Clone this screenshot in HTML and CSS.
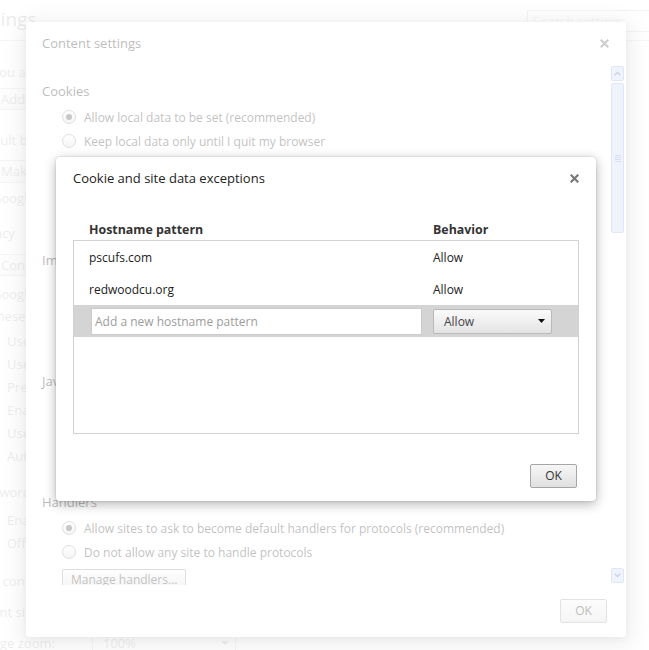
FILE: index.html
```html
<!DOCTYPE html>
<html lang="en">
<head>
<meta charset="utf-8">
<title>Settings - Cookie and site data exceptions</title>
<link rel="stylesheet" href="styles.css">
</head>
<body>
<div class="page">
  <header class="page-header">
    <h1 class="page-title">Settings</h1>
    <div class="search">Search settings</div>
  </header>
  <main class="page-main">
    <p class="ind line m19">You are currently the only Google Chrome user.</p>
    <div class="ind m4"><span class="pbtn">Add new user...</span></div>
    <h3 class="sec-title m18">Default browser</h3>
    <div class="ind m8"><span class="pbtn tall">Make Google Chrome my default browser</span></div>
    <p class="ind line m3">Google Chrome is not currently your default browser.</p>
    <h3 class="sec-title m11">Privacy</h3>
    <div class="ind m9"><span class="pbtn">Content settings...</span> <span class="pbtn">Clear browsing data...</span></div>
    <p class="ind para m7">Google Chrome may use web services to improve your browsing experience. You may optionally disable<br>these services.</p>
    <div class="ind chk-list m2">
      <div class="chk-row"><span class="chk"></span>Use a web service to help resolve navigation errors</div>
      <div class="chk-row"><span class="chk"></span>Use a prediction service to help complete searches and URLs typed in the address bar</div>
      <div class="chk-row"><span class="chk"></span>Predict network actions to improve page load performance</div>
      <div class="chk-row"><span class="chk"></span>Enable phishing and malware protection</div>
      <div class="chk-row"><span class="chk"></span>Use a web service to help resolve spelling errors</div>
      <div class="chk-row"><span class="chk"></span>Automatically send usage statistics and crash reports to Google</div>
    </div>
    <h3 class="sec-title m13">Passwords and forms</h3>
    <div class="ind chk-list m4">
      <div class="chk-row"><span class="chk"></span>Enable Autofill to fill out web forms in a single click.</div>
      <div class="chk-row"><span class="chk"></span>Offer to save passwords I enter on the web.</div>
    </div>
    <h3 class="sec-title m15">Web content</h3>
    <div class="form-row m7"><span class="form-label">Font size:</span><span class="pselect">Medium<i class="caret"></i></span></div>
    <div class="form-row m7"><span class="form-label">Page zoom:</span><span class="pselect">100%<i class="caret"></i></span></div>
  </main>
</div>

<div class="overlay overlay-low"></div>

<section class="cs-dialog">
  <div class="cs-head">
    <span class="cs-title">Content settings</span>
    <span class="close"><svg width="9" height="9" viewBox="0 0 9 9"><path d="M1.5 1.5L7.5 7.5M7.5 1.5L1.5 7.5" stroke="#6e6e6e" stroke-width="2.2" stroke-linecap="square"/></svg></span>
  </div>
  <div class="cs-body">
    <div class="cs-scroll">
      <div class="cs-sec first">
        <h4 class="cs-h">Cookies</h4>
        <div class="cs-opts">
          <div class="opt"><span class="radio on"></span>Allow local data to be set (recommended)</div>
          <div class="opt"><span class="radio"></span>Keep local data only until I quit my browser</div>
          <div class="opt"><span class="radio"></span>Block sites from setting any data</div>
          <div class="opt"><span class="cbox"></span>Block third-party cookies and site data</div>
        </div>
        <div class="cs-btns"><span class="sbtn">Manage exceptions...</span><span class="sbtn">All cookies and site data...</span></div>
      </div>
      <div class="cs-sec">
        <h4 class="cs-h">Images</h4>
        <div class="cs-opts">
          <div class="opt"><span class="radio on"></span>Show all images (recommended)</div>
          <div class="opt"><span class="radio"></span>Do not show any images</div>
        </div>
        <div class="cs-btns"><span class="sbtn">Manage exceptions...</span></div>
      </div>
      <div class="cs-sec">
        <h4 class="cs-h">JavaScript</h4>
        <div class="cs-opts">
          <div class="opt"><span class="radio on"></span>Allow all sites to run JavaScript (recommended)</div>
          <div class="opt"><span class="radio"></span>Do not allow any site to run JavaScript</div>
        </div>
        <div class="cs-btns"><span class="sbtn">Manage exceptions...</span></div>
      </div>
      <div class="cs-sec">
        <h4 class="cs-h">Handlers</h4>
        <div class="cs-opts">
          <div class="opt"><span class="radio on"></span>Allow sites to ask to become default handlers for protocols (recommended)</div>
          <div class="opt"><span class="radio"></span>Do not allow any site to handle protocols</div>
        </div>
        <div class="cs-btns"><span class="sbtn">Manage handlers...</span></div>
      </div>
    </div>
    <div class="scrollbar">
      <div class="sb-btn"><svg width="7" height="5" viewBox="0 0 7 5"><path d="M0.8 4.2L3.5 1.4L6.2 4.2" fill="none" stroke="#5b71a1" stroke-width="1.3"/></svg></div>
      <div class="sb-thumb"><span class="grip"></span><span class="grip"></span><span class="grip"></span><span class="grip"></span></div>
      <div class="sb-space"></div>
      <div class="sb-btn down"><svg width="7" height="5" viewBox="0 0 7 5"><path d="M0.8 0.8L3.5 3.6L6.2 0.8" fill="none" stroke="#5b71a1" stroke-width="1.3"/></svg></div>
    </div>
  </div>
  <div class="cs-foot"><span class="btn">OK</span></div>
</section>

<div class="overlay overlay-high"></div>

<section class="cd-dialog">
  <div class="cd-head">
    <span class="cd-title">Cookie and site data exceptions</span>
    <span class="close"><svg width="9" height="9" viewBox="0 0 9 9"><path d="M1.5 1.5L7.5 7.5M7.5 1.5L1.5 7.5" stroke="#787878" stroke-width="2.2" stroke-linecap="square"/></svg></span>
  </div>
  <div class="cd-body">
    <div class="cd-cols"><span class="col-host">Hostname pattern</span><span>Behavior</span></div>
    <div class="cd-list">
      <div class="cd-row"><span class="col-host">pscufs.com</span><span>Allow</span></div>
      <div class="cd-row"><span class="col-host">redwoodcu.org</span><span>Allow</span></div>
      <div class="cd-row edit">
        <div class="fake-input">Add a new hostname pattern</div>
        <div class="fake-select"><span>Allow</span><svg width="7" height="4" viewBox="0 0 7 4"><polygon points="0,0 7,0 3.5,4" fill="#111"/></svg></div>
      </div>
    </div>
  </div>
  <div class="cd-foot"><span class="btn">OK</span></div>
</section>
</body>
</html>
```
FILE: styles.css
```css
* { box-sizing: border-box; }
html, body { margin: 0; padding: 0; }
body {
  width: 649px;
  height: 650px;
  overflow: hidden;
  position: relative;
  background: #fff;
  font-family: "Open Sans", "Liberation Sans", sans-serif;
  font-size: 12px;
  color: #303942;
}

/* ---------- background settings page ---------- */
.page { margin-left: -40px; width: 700px; font-size: 13px; }
.page-header {
  height: 41px;
  border-bottom: 1px solid #9a9a9a;
  display: flex;
  justify-content: space-between;
  align-items: flex-start;
}
.page-title { margin: 0; padding: 6px 0 0 6px; font-size: 19px; line-height: 26px; font-weight: normal; color: #202020; }
.search {
  margin-top: 10px;
  width: 133px;
  height: 22px;
  border: 1px solid #8a8a8a;
  padding-left: 5px;
  line-height: 20px;
  font-size: 13px;
  color: #999;
}
.page-main { padding-left: 12px; }
.sec-title { margin: 0; font-size: 13px; line-height: 24px; font-weight: normal; white-space: nowrap; }
.ind { padding-left: 20px; margin-bottom: 0; margin-right: 0; }
.line { line-height: 24px; margin-bottom: 0; white-space: nowrap; }
.para { line-height: 22px; margin-bottom: 0; white-space: nowrap; }
.pbtn {
  display: inline-block;
  height: 22px;
  line-height: 20px;
  padding: 0 8px;
  border: 1px solid #8f8f8f;
  border-radius: 2px;
  background: linear-gradient(#fafafa, #dedede);
  font-size: 13px;
  white-space: nowrap;
}
.pbtn.tall { height: 23px; }
.chk-list { display: flex; flex-direction: column; margin-left: -7px; }
.chk-row { height: 23px; display: flex; align-items: center; gap: 9px; white-space: nowrap; }
.chk { width: 13px; height: 13px; border: 1px solid #bbb; border-radius: 2px; background: #fff; flex: none; }
.form-row { display: flex; align-items: center; height: 24px; padding-left: 13px; white-space: nowrap; }
.form-label { width: 107px; }
.pselect {
  width: 144px;
  height: 22px;
  border: 1px solid #999;
  border-radius: 2px;
  padding-left: 10px;
  display: flex;
  align-items: center;
  justify-content: space-between;
  padding-right: 6px;
}
.caret { width: 0; height: 0; border-left: 4px solid transparent; border-right: 4px solid transparent; border-top: 4px solid #555; }

.m2 { margin-top: 2px; } .m3 { margin-top: 3px; } .m4 { margin-top: 4px; }
.m7 { margin-top: 7px; } .m8 { margin-top: 8px; } .m9 { margin-top: 9px; }
.m11 { margin-top: 11px; } .m13 { margin-top: 13px; } .m15 { margin-top: 15px; }
.m18 { margin-top: 18px; } .m19 { margin-top: 19px; }

/* ---------- overlays ---------- */
.overlay { position: absolute; left: 0; top: 0; right: 0; bottom: 0; }
.overlay-low { background: rgba(255, 255, 255, 0.72); }
.overlay-high { background: rgba(255, 255, 255, 0.67); }

/* ---------- content settings dialog ---------- */
.cs-dialog {
  position: absolute;
  left: 26px;
  top: 22px;
  width: 600px;
  height: 615px;
  background: #fff;
  border-radius: 3px;
  box-shadow: 0 4px 23px 5px rgba(0, 0, 0, 0.2), 0 2px 6px rgba(0, 0, 0, 0.15);
  display: flex;
  flex-direction: column;
  color: #444;
}
.cs-head {
  height: 44px;
  flex: none;
  padding: 0 17px 2px 16px;
  display: flex;
  align-items: center;
  justify-content: space-between;
}
.cs-title { font-size: 13px; line-height: 20px; color: #333; }
.close { display: flex; align-items: center; height: 20px; }
.cs-body { height: 519px; flex: none; display: flex; }
.cs-scroll { flex: 1; overflow: hidden; padding: 15px 0 0 16px; }
.cs-sec { margin-top: 22px; }
.cs-sec.first { margin-top: 0; }
.cs-h { margin: 0; font-size: 13px; line-height: 20px; font-weight: normal; color: #333; }
.cs-opts { margin-top: 4px; }
.opt { height: 24px; display: flex; align-items: center; gap: 8px; padding-left: 20px; white-space: nowrap; }
.radio {
  width: 14px; height: 14px; flex: none;
  border: 1px solid #9a9a9a;
  border-radius: 50%;
  background: linear-gradient(#fdfdfd, #e0e0e0);
  display: flex; align-items: center; justify-content: center;
}
.radio.on::after { content: ""; width: 6px; height: 6px; border-radius: 50%; background: #555; }
.cbox { width: 13px; height: 13px; flex: none; border: 1px solid #9a9a9a; border-radius: 2px; background: linear-gradient(#fdfdfd, #e0e0e0); }
.cs-btns { margin-top: 5px; padding-left: 20px; display: flex; gap: 8px; }
.sbtn {
  height: 22px;
  line-height: 20px;
  padding: 0 8px;
  border: 1px solid #9a9a9a;
  border-radius: 2px;
  background: linear-gradient(#fafafa, #dedede);
  white-space: nowrap;
  color: #444;
}
.scrollbar { width: 13px; margin-right: 2px; display: flex; flex-direction: column; }
.sb-btn {
  height: 15px; flex: none;
  border: 1px solid #9fb4e6;
  border-radius: 2px;
  background: #cdd9f6;
  display: flex; align-items: center; justify-content: center;
}
.sb-btn.down { margin-bottom: 2px; }
.sb-thumb {
  margin-top: 2px;
  height: 150px; flex: none;
  border: 1px solid #9fb4e6;
  border-radius: 2px;
  background: #cdd9f6;
  display: flex; flex-direction: column; align-items: center; justify-content: center; gap: 1px;
}
.grip { width: 6px; height: 1px; background: #8aa0dc; }
.sb-space { flex: 1; }
.cs-foot { height: 52px; flex: none; display: flex; justify-content: flex-end; align-items: flex-start; padding: 14px 19px 0 0; }

.btn {
  height: 24px;
  min-width: 47px;
  line-height: 22px;
  text-align: center;
  border: 1px solid #a6a6a6;
  border-radius: 2px;
  background: linear-gradient(#f6f6f6, #e0e0e0);
  color: #333;
  font-size: 12px;
  padding: 0 10px;
}

/* ---------- cookie exceptions dialog ---------- */
.cd-dialog {
  position: absolute;
  left: 56px;
  top: 157px;
  width: 540px;
  height: 344px;
  background: #fff;
  border-radius: 4px;
  box-shadow: 0 3px 12px rgba(0, 0, 0, 0.3), 0 0 2px rgba(0, 0, 0, 0.2);
  display: flex;
  flex-direction: column;
  color: #222;
}
.cd-head {
  height: 44px; flex: none;
  padding: 11px 17px 0 17px;
  display: flex;
  justify-content: space-between;
  align-items: flex-start;
}
.cd-title { font-size: 13px; line-height: 20px; }
.cd-body { padding: 20px 17px 0; flex: none; }
.cd-cols { display: flex; height: 18px; line-height: 18px; font-weight: bold; font-size: 12.4px; padding-left: 16px; color: #333; }
.col-host { width: 344px; flex: none; }
.cd-list { margin-top: 1px; height: 194px; border: 1px solid #d2d2d2; }
.cd-row { display: flex; align-items: center; height: 32px; padding-left: 15px; }
.cd-row.edit { background: #d4d4d4; padding-left: 17px; }
.fake-input {
  width: 331px; height: 27px;
  background: #fff;
  border: 1px solid #cbcbcb;
  padding-left: 3px;
  line-height: 25px;
  color: #9c9c9c;
}
.fake-select {
  margin-left: 11px;
  width: 119px; height: 25px;
  border: 1px solid #b9b9b9;
  border-radius: 2px;
  background: linear-gradient(#fafafa, #e4e4e4);
  display: flex; align-items: center; justify-content: space-between;
  padding: 0 6px 0 10px;
  color: #444;
}
.cd-foot { flex: 1; display: flex; justify-content: flex-end; align-items: flex-start; padding: 30px 19px 0 0; }
```
